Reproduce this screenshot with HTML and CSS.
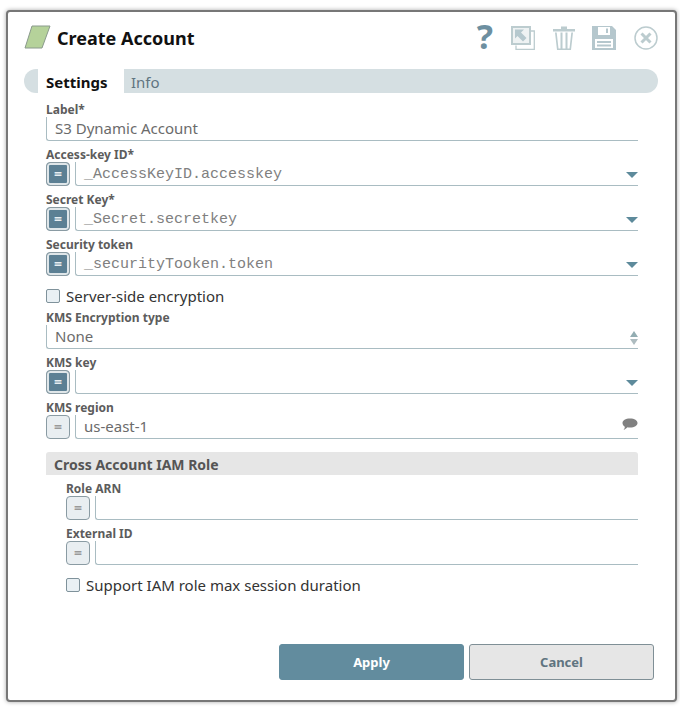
FILE: index.html
```html
<!DOCTYPE html>
<html lang="en">
<head>
    <meta charset="UTF-8">
    <meta name="viewport" content="width=device-width, initial-scale=1.0">
    <title>Create Account</title>
    <link rel="stylesheet" href="styles.css">
</head>
<body>
    <div class="dialog">
        <div class="header">
            <svg class="logo" width="27" height="24" viewBox="0 0 27 24">
                <polygon points="8,1 26,1 18,23 1,23" fill="#b5d29a" stroke="#8a9a8c" stroke-width="1"/>
            </svg>
            <h1>Create Account</h1>
            <div class="tools">
                <span class="help">?</span>
                <svg class="tool" width="24" height="24" viewBox="0 0 24 24">
                    <path d="M1 1H19V18H1Z" fill="#eef2f3" stroke="#bccccf" stroke-width="2"/>
                    <path d="M20 5H23.300V23.300H5V19.500" fill="none" stroke="#bccccf" stroke-width="1.300"/>
                    <path d="M4 3.500H13L10 6.500L15.500 12L12 15.500L6.500 10L4 12.500Z" fill="#b5c8ce"/>
                </svg>
                <svg class="tool" width="22" height="24" viewBox="0 0 22 24">
                    <path d="M0 3H22V5.500H0Z M8 0.500H14V3H8Z" fill="#bccccf"/>
                    <path d="M2 6.500L4 24H18L20 6.500H18.300L16.500 22.500H14.500V6.500H12.500V22.500H9.500V6.500H7.500V22.500H5.500L3.700 6.500Z" fill="#bccccf"/>
                </svg>
                <svg class="tool" width="24" height="24" viewBox="0 0 24 24">
                    <path fill-rule="evenodd" d="M0 0H20L24 4V24H0Z M6 1V9H18V1Z M3 13V22H21V13Z M5 15H19V17H5Z M5 18.500H19V20.500H5Z M14 2.500H16V7H14Z" fill="#b5c7cd"/>
                </svg>
                <svg class="tool" width="24" height="24" viewBox="0 0 24 24">
                    <circle cx="12" cy="12" r="11" fill="none" stroke="#bccccf" stroke-width="1.500"/>
                    <path d="M7.500 7.500L16.500 16.500M16.500 7.500L7.500 16.500" stroke="#bccccf" stroke-width="3"/>
                </svg>
            </div>
        </div>

        <div class="tabs">
            <div class="tab active">Settings</div>
            <div class="tab">Info</div>
        </div>

        <div class="form">
            <div class="field">
                <label>Label*</label>
                <div class="control"><div class="input">S3 Dynamic Account</div></div>
            </div>
            <div class="field">
                <label>Access-key ID*</label>
                <div class="control">
                    <button class="expr on">=</button>
                    <div class="input mono">_AccessKeyID.accesskey<span class="caret"></span></div>
                </div>
            </div>
            <div class="field">
                <label>Secret Key*</label>
                <div class="control">
                    <button class="expr on">=</button>
                    <div class="input mono">_Secret.secretkey<span class="caret"></span></div>
                </div>
            </div>
            <div class="field">
                <label>Security token</label>
                <div class="control">
                    <button class="expr on">=</button>
                    <div class="input mono">_securityTooken.token<span class="caret"></span></div>
                </div>
            </div>
            <div class="check">
                <span class="box"></span>Server-side encryption
            </div>
            <div class="field">
                <label>KMS Encryption type</label>
                <div class="control">
                    <div class="input">None
                        <span class="spinner"><i class="up"></i><i class="down"></i></span>
                    </div>
                </div>
            </div>
            <div class="field">
                <label>KMS key</label>
                <div class="control">
                    <button class="expr on">=</button>
                    <div class="input mono"><span class="caret"></span></div>
                </div>
            </div>
            <div class="field">
                <label>KMS region</label>
                <div class="control">
                    <button class="expr">=</button>
                    <div class="input">us-east-1
                        <svg class="bubble" width="16" height="13" viewBox="0 0 16 13">
                            <path d="M8 0.500C12.500 0.500 15.500 2.500 15.500 5C15.500 7.500 12.500 9.500 8 9.500C7 9.500 6 9.400 5.500 9.300C4.500 10.500 3 11.500 1.500 12C2.300 11 2.800 10 2.800 8.700C1.300 7.800 0.500 6.500 0.500 5C0.500 2.500 3.500 0.500 8 0.500Z" fill="#808080"/>
                        </svg>
                    </div>
                </div>
            </div>

            <div class="section">Cross Account IAM Role</div>
            <div class="nested">
                <div class="field">
                    <label>Role ARN</label>
                    <div class="control">
                        <button class="expr">=</button>
                        <div class="input"></div>
                    </div>
                </div>
                <div class="field">
                    <label>External ID</label>
                    <div class="control">
                        <button class="expr">=</button>
                        <div class="input"></div>
                    </div>
                </div>
                <div class="check">
                    <span class="box"></span>Support IAM role max session duration
                </div>
            </div>
        </div>

        <div class="footer">
            <button class="btn btn-apply">Apply</button>
            <button class="btn btn-cancel">Cancel</button>
        </div>
    </div>
</body>
</html>
```

FILE: styles.css
```css
* {
    margin: 0;
    padding: 0;
    box-sizing: border-box;
}

body {
    font-family: 'Noto Sans', 'Open Sans', sans-serif;
    background: white;
    padding: 10px 3px 6px 6px;
}

.dialog {
    width: 671px;
    height: 692px;
    background: white;
    border: 2px solid #777;
    border-radius: 4px;
    box-shadow: 0 0 4px rgba(0, 0, 0, 0.35);
    padding: 0 17px 0 16px;
    display: flex;
    flex-direction: column;
}

.header {
    display: flex;
    align-items: center;
    height: 57px;
    padding-bottom: 6px;
}

.logo {
    margin-top: -2px;
}

h1 {
    font-size: 18px;
    font-weight: 700;
    color: #111;
    margin-left: 6px;
}

.tools {
    display: flex;
    align-items: center;
    margin-left: auto;
    height: 24px;
}

.help {
    font-size: 34px;
    font-weight: 700;
    line-height: 24px;
    color: #6d8fa0;
    margin-top: -3px;
    margin-right: 18px;
}

.tool {
    display: block;
    margin-left: 18px;
}

.help + .tool {
    margin-left: 0;
}

.tool:nth-child(4) {
    margin-left: 17px;
}

.tabs {
    display: flex;
    height: 24px;
    background: #d5dfe2;
    border-radius: 12px;
    padding-left: 14px;
}

.tab {
    font-size: 15px;
    line-height: 26px;
    padding: 0 7px;
    color: #5f7480;
}

.tab.active {
    background: white;
    color: #111;
    font-weight: 700;
    width: 86px;
    padding: 0 8px;
}

.form {
    padding: 8px 20px 0 22px;
}

.field {
    height: 45px;
}

label {
    display: block;
    font-size: 12px;
    font-weight: 700;
    height: 16px;
    line-height: 18px;
    color: #5c5c5c;
}

.control {
    display: flex;
    gap: 5px;
    height: 25px;
}

.input {
    flex: 1;
    position: relative;
    height: 24px;
    border-left: 1px solid #a9bcc2;
    border-bottom: 1px solid #a9bcc2;
    border-bottom-left-radius: 3px;
    font-size: 15px;
    line-height: 22px;
    padding-left: 8px;
    color: #6b6b6b;
}

.mono {
    font-family: 'Liberation Mono', monospace;
    line-height: 25px;
    color: #808080;
}

.expr {
    width: 24px;
    height: 24px;
    border: 1px solid #8a9ba3;
    border-radius: 4px;
    background: #e9eef1;
    color: #999;
    font-family: 'Noto Sans', sans-serif;
    font-size: 14px;
    font-weight: 700;
    line-height: 20px;
}

.expr.on {
    background: #5c8094;
    color: #e8eef1;
    box-shadow: inset 0 0 0 2px #dfe6e9;
}

.caret {
    position: absolute;
    right: 0;
    top: 10px;
    border-left: 6px solid transparent;
    border-right: 6px solid transparent;
    border-top: 6px solid #5d8a9b;
}

.spinner {
    position: absolute;
    right: 0;
    top: 6px;
    display: flex;
    flex-direction: column;
    gap: 2px;
}

.spinner i {
    display: block;
    border-left: 4px solid transparent;
    border-right: 4px solid transparent;
}

.spinner .up {
    border-bottom: 6px solid #93adb2;
}

.spinner .down {
    border-top: 6px solid #aebcc0;
}

.bubble {
    position: absolute;
    right: 0;
    top: 3px;
}

.check {
    display: flex;
    align-items: center;
    font-size: 15px;
    line-height: 20px;
    height: 21px;
    color: #333;
    margin: 0 0 3px;
}

.field + .check {
    margin-top: 4px;
}

.nested .field + .check {
    margin-top: 4px;
}

.box {
    width: 14px;
    height: 14px;
    border: 1px solid #7f929b;
    border-radius: 2px;
    background: #e9f0f4;
    margin-right: 6px;
}

.section {
    height: 23px;
    margin-top: 8px;
    padding-left: 8px;
    background: #e6e6e6;
    border-radius: 3px 3px 0 0;
    font-size: 14px;
    font-weight: 700;
    line-height: 26px;
    color: #555;
}

.nested {
    padding: 5px 0 0 20px;
}

.footer {
    display: flex;
    gap: 5px;
    justify-content: flex-end;
    margin-top: auto;
    margin-bottom: 20px;
    padding-right: 4px;
}

.btn {
    width: 185px;
    height: 36px;
    border-radius: 3px;
    font-family: 'Noto Sans', sans-serif;
    font-size: 13px;
    font-weight: 700;
}

.btn-apply {
    background: #628c9e;
    border: 1px solid #628c9e;
    color: white;
}

.btn-cancel {
    background: #e6e6e6;
    border: 1px solid #7f8f96;
    color: #5f7480;
}
```
